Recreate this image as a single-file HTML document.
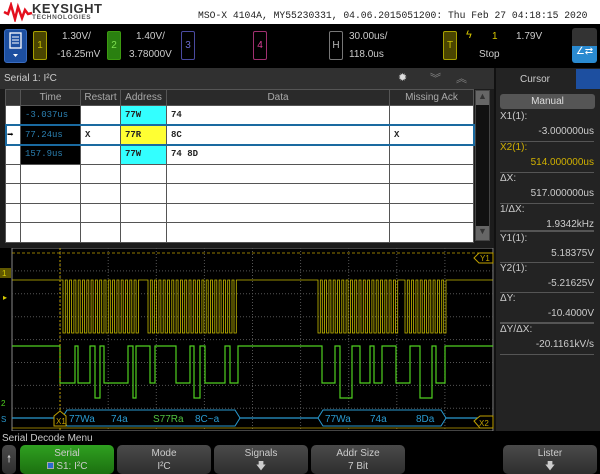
<!DOCTYPE html>
<html><head><meta charset="utf-8"><style>
*{margin:0;padding:0;box-sizing:border-box}
body{width:600px;height:474px;overflow:hidden;background:#000;font-family:"Liberation Sans",sans-serif;color:#ddd;position:relative}
.a{position:absolute}
.top{left:0;top:0;width:600px;height:24px;background:#fff}
.hdr{left:0;top:24px;width:600px;height:44px;background:#000}
.t{font-size:10px;color:#ccc;white-space:nowrap}
.mono{font-family:"Liberation Mono",monospace}
table{border-collapse:collapse;table-layout:fixed}
td{border:1px solid #555;height:19.5px;font-family:"Liberation Mono",monospace;font-size:9px;font-weight:bold;color:#222;padding-left:4px;background:#fff}
th{background:#2a2a2a;color:#aaa;font-weight:normal;font-size:10px;height:16px;border:1px solid #555}
td.tm{background:#000;color:#2b7fb0;font-weight:normal}
.btn{top:445px;height:29px;border-radius:5px;background:linear-gradient(#4a4a4a,#2e2e2e);font-size:10px;color:#ccc;text-align:center;line-height:13px;padding-top:2px}
.cl{font-size:10px;color:#ccc;left:500px}
.cr{font-size:10px;color:#ccc;right:6px;text-align:right}
.sep{left:500px;width:94px;height:1px;background:#555}
</style></head><body>
<div class="a top"></div>
<svg class="a" style="left:3px;top:2px" width="30" height="20"><polyline points="1,10 5,12 8,3 12,17 15,5 19,16 22,8 25,12 29,11" fill="none" stroke="#e4101e" stroke-width="2.5"/></svg>
<div class="a" style="left:32px;top:1px;font-size:13px;font-weight:bold;color:#333;letter-spacing:0.5px">KEYSIGHT</div>
<div class="a" style="left:32px;top:14px;font-size:6.5px;color:#555;letter-spacing:0.6px;font-weight:bold">TECHNOLOGIES</div>
<div class="a mono" style="left:198px;top:10px;font-size:9.7px;color:#222;white-space:nowrap">MSO-X 4104A, MY55230331, 04.06.2015051200: Thu Feb 27 04:18:15 2020</div>
<div class="a hdr"></div>
<div class="a" style="left:4px;top:29px;width:23px;height:34px;background:#1d4fa0;border-radius:3px;border:1px solid #3a6cc0"></div>
<svg class="a" style="left:8px;top:32px" width="15" height="28"><rect x="2" y="1" width="11" height="15" fill="none" stroke="#fff" stroke-width="1.3"/><path d="M4 5h7M4 8h7M4 11h7" stroke="#fff"/><path d="M5 22h5l-2.5 3z" fill="#fff"/></svg>
<div class="a" style="left:33px;top:31px;width:14px;height:29px;border:1px solid #a8a000;background:#4a4500;border-radius:2px;color:#c8c000;font-size:10px;text-align:center;line-height:27px">1</div>
<div class="a t" style="left:62px;top:31px">1.30V/</div><div class="a t" style="left:57px;top:49px">-16.25mV</div>
<div class="a" style="left:107px;top:31px;width:14px;height:29px;border:1px solid #3c9a10;background:#2a8010;border-radius:2px;color:#7ee050;font-size:10px;text-align:center;line-height:27px">2</div>
<div class="a t" style="left:136px;top:31px">1.40V/</div><div class="a t" style="left:129px;top:49px">3.78000V</div>
<div class="a" style="left:181px;top:31px;width:14px;height:29px;border:1px solid #4a4aa0;border-radius:2px;color:#6a6ad0;font-size:10px;text-align:center;line-height:27px">3</div>
<div class="a" style="left:253px;top:31px;width:14px;height:29px;border:1px solid #a03070;border-radius:2px;color:#e0409a;font-size:10px;text-align:center;line-height:27px">4</div>
<div class="a" style="left:329px;top:31px;width:14px;height:29px;border:1px solid #777;border-radius:2px;color:#bbb;font-size:10px;text-align:center;line-height:27px">H</div>
<div class="a t" style="left:349px;top:31px">30.00us/</div><div class="a t" style="left:349px;top:49px">118.0us</div>
<div class="a" style="left:443px;top:31px;width:14px;height:29px;border:1px solid #a8a000;background:#4a4500;border-radius:2px;color:#c8c000;font-size:10px;text-align:center;line-height:27px">T</div>
<div class="a" style="left:466px;top:29px;color:#d8c800;font-size:11px">ϟ</div><div class="a" style="left:492px;top:31px;color:#d8c800;font-size:10px">1</div>
<div class="a t" style="left:516px;top:31px">1.79V</div><div class="a t" style="left:479px;top:49px">Stop</div>
<div class="a" style="left:572px;top:28px;width:25px;height:18px;background:#333;border-radius:3px 3px 0 0"></div>
<div class="a" style="left:572px;top:46px;width:25px;height:17px;background:#2a8ad0;border-radius:0 0 3px 3px;color:#fff;font-size:10px;text-align:center">∠⇄</div>
<div class="a" style="left:0;top:68px;width:494px;height:180px;background:#1c1c1c"></div>
<div class="a" style="left:0;top:68px;width:494px;height:21px;background:#303030"></div>
<div class="a t" style="left:4px;top:73px">Serial 1: I²C</div>
<div class="a" style="left:398px;top:71px;color:#ddd;font-size:11px">✹</div>
<div class="a" style="left:430px;top:70px;color:#888;font-size:11px">︾</div><div class="a" style="left:456px;top:70px;color:#888;font-size:11px">︽</div>
<table class="a" style="left:5px;top:89px;width:468px">
<colgroup><col style="width:15px"><col style="width:60px"><col style="width:40px"><col style="width:46px"><col style="width:223px"><col style="width:84px"></colgroup>
<tr><th style="background:#333"></th><th>Time</th><th>Restart</th><th>Address</th><th>Data</th><th>Missing Ack</th></tr>
<tr><td></td><td class="tm">-3.037us</td><td></td><td style="background:#3ff">77W</td><td>74</td><td></td></tr>
<tr style="outline:2px solid #1a6aa0;outline-offset:-1px"><td style="color:#000;font-size:11px;padding-left:1px">➡</td><td class="tm">77.24us</td><td>X</td><td style="background:#ff3">77R</td><td>8C</td><td>X</td></tr>
<tr><td></td><td class="tm">157.9us</td><td></td><td style="background:#3ff">77W</td><td>74 8D</td><td></td></tr>
<tr><td></td><td></td><td></td><td></td><td></td><td></td></tr>
<tr><td></td><td></td><td></td><td></td><td></td><td></td></tr>
<tr><td></td><td></td><td></td><td></td><td></td><td></td></tr>
<tr><td></td><td></td><td></td><td></td><td></td><td></td></tr>
</table>
<div class="a" style="left:475px;top:90px;width:15px;height:151px;background:#111;border:1px solid #444"></div>
<div class="a" style="left:476px;top:91px;width:13px;height:14px;background:#666;color:#333;font-size:9px;text-align:center">▲</div>
<div class="a" style="left:476px;top:226px;width:13px;height:14px;background:#666;color:#333;font-size:9px;text-align:center">▼</div>
<div class="a" style="left:494px;top:68px;width:106px;height:364px;background:#232323;border-left:2px solid #111"></div>
<div class="a t" style="left:520px;top:74px">Cursor</div>
<div class="a" style="left:576px;top:69px;width:24px;height:20px;background:#1d4fa0"></div>
<div class="a" style="left:500px;top:94px;width:95px;height:15px;background:#555;border-radius:3px;color:#ddd;font-size:10px;text-align:center;line-height:15px">Manual</div>
<div class="a cl" style="top:111px">X1(1):</div><div class="a cr" style="top:126px">-3.000000us</div>
<div class="a sep" style="top:141px"></div>
<div class="a cl" style="top:142px;color:#d0b000">X2(1):</div><div class="a cr" style="top:157px;color:#d0b000">514.000000us</div>
<div class="a sep" style="top:172px"></div>
<div class="a cl" style="top:173px">ΔX:</div><div class="a cr" style="top:188px">517.000000us</div>
<div class="a sep" style="top:203px"></div>
<div class="a cl" style="top:204px">1/ΔX:</div><div class="a cr" style="top:219px">1.9342kHz</div>
<div class="a sep" style="top:230px;height:2px"></div>
<div class="a cl" style="top:233px">Y1(1):</div><div class="a cr" style="top:248px">5.18375V</div>
<div class="a sep" style="top:262px"></div>
<div class="a cl" style="top:263px">Y2(1):</div><div class="a cr" style="top:278px">-5.21625V</div>
<div class="a sep" style="top:292px"></div>
<div class="a cl" style="top:293px">ΔY:</div><div class="a cr" style="top:308px">-10.4000V</div>
<div class="a sep" style="top:322px;height:2px"></div>
<div class="a cl" style="top:324px">ΔY/ΔX:</div><div class="a cr" style="top:339px">-20.1161kV/s</div>
<div class="a sep" style="top:354px"></div>
<svg class="a" id="w" style="left:0;top:248px" width="494" height="184"></svg>
<div class="a" style="left:0;top:431px;width:600px;height:43px;background:#000"></div>
<div class="a t" style="left:2px;top:433px">Serial Decode Menu</div>
<div class="a btn" style="left:2px;width:14px;font-size:10px;padding-top:8px">🠕</div>
<div class="a btn" style="left:20px;width:94px;background:linear-gradient(#2fa020,#1c7010)">Serial<br><span style="display:inline-block;width:7px;height:7px;background:#2a6ad0;border:1px solid #aaa"></span> S1: I²C</div>
<div class="a btn" style="left:117px;width:94px">Mode<br>I²C</div>
<div class="a btn" style="left:214px;width:94px">Signals<br>🡇</div>
<div class="a btn" style="left:311px;width:94px">Addr Size<br>7 Bit</div>
<div class="a btn" style="left:503px;width:94px">Lister<br>🡇</div>
<script>
var s=document.getElementById('w'),h='';
h+='<rect x="12" y="0" width="481" height="183" fill="none" stroke="#888" stroke-width="1"/>';
for(var i=1;i<10;i++){var x=12+i*48.1;h+='<line x1="'+x+'" y1="0" x2="'+x+'" y2="183" stroke="#555" stroke-dasharray="1,2"/>';}
for(var j=1;j<8;j++){var y=j*22.9;h+='<line x1="12" y1="'+y+'" x2="493" y2="'+y+'" stroke="#555" stroke-dasharray="1,2"/>';}
var H=32,L=85,p='M12 '+H;
function clk(a,b){var x=a;while(x<b){p+=' L'+x+' '+H+' L'+x+' '+L+' L'+(x+2.3)+' '+L+' L'+(x+2.3)+' '+H;x+=4.3;}}
clk(63,137);clk(148,238);p+=' L240 '+H;clk(318,398);clk(405,446);p+=' L493 '+H;
h+='<path d="'+p+'" fill="none" stroke="#c8bc00" stroke-width="0.8"/>';
var G=98,D=135,E=150,q='M12 '+G,seg=[[60,75,D],[78,90,D],[95,100,E],[104,128,D],[133,136,E],[150,155,D],[176,190,D],[194,200,E],[205,225,D],[230,238,D],[322,335,D],[340,352,E],[360,370,D],[374,382,D],[396,410,D],[420,432,E],[436,445,D]];
seg.forEach(function(g){q+=' L'+g[0]+' '+G+' L'+g[0]+' '+g[2]+' L'+g[1]+' '+g[2]+' L'+g[1]+' '+G;});q+=' L493 '+G;
h+='<path d="'+q+'" fill="none" stroke="#4fd020" stroke-width="1.2"/>';
h+='<line x1="12" y1="170" x2="493" y2="170" stroke="#2a9ad0" stroke-width="1.2"/>';
h+='<path d="M62 170 L67 162 L235 162 L240 170 L235 178 L67 178Z" fill="#000" stroke="#2a9ad0"/>';
h+='<path d="M318 170 L323 162 L441 162 L446 170 L441 178 L323 178Z" fill="#000" stroke="#2a9ad0"/>';
h+='<g font-size="10" font-family="Liberation Sans"><text x="69" y="174" fill="#2a9ad0">77Wa</text><text x="111" y="174" fill="#2a9ad0">74a</text><text x="153" y="174" fill="#4fc040">S77Ra</text><text x="195" y="174" fill="#2a9ad0">8C~a</text>';
h+='<text x="325" y="174" fill="#2a9ad0">77Wa</text><text x="370" y="174" fill="#2a9ad0">74a</text><text x="416" y="174" fill="#2a9ad0">8Da</text></g>';
h+='<line x1="60" y1="0" x2="60" y2="184" stroke="#c0a000" stroke-dasharray="2,2"/><path d="M54 168 L60 163 L66 168 L66 178 L54 178Z" fill="#000" stroke="#c0a000"/><text x="56" y="176" fill="#c0a000" font-size="8">X1</text>';
h+='<line x1="12" y1="180" x2="493" y2="180" stroke="#c0a000" stroke-width="0.8"/><line x1="12" y1="5" x2="493" y2="5" stroke="#c0a000" stroke-width="0.8" stroke-dasharray="3,2"/>';
h+='<path d="M474 10 L479 5 L493 5 L493 15 L479 15Z" fill="#000" stroke="#c0a000"/><text x="480" y="13" fill="#c0a000" font-size="8">Y1</text>';
h+='<path d="M474 173 L480 168 L493 168 L493 180 L480 180Z" fill="#000" stroke="#c0a000"/><text x="479" y="178" fill="#c0a000" font-size="8">X2</text>';
h+='<rect x="0" y="20" width="11" height="10" fill="#605800"/><text x="2" y="28" fill="#d8cc00" font-size="8">1</text><text x="3" y="52" fill="#d8cc00" font-size="8">▸</text>';
h+='<text x="1" y="158" fill="#4fd020" font-size="8">2</text><text x="1" y="174" fill="#2a9ad0" font-size="8">S</text>';
s.innerHTML=h;
</script>
</body></html>
